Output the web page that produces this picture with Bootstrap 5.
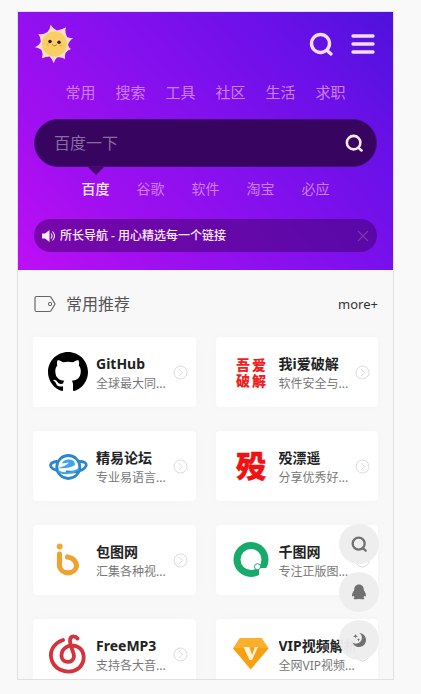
<!DOCTYPE html>
<html lang="zh-CN">
<head>
<meta charset="utf-8">
<meta name="viewport" content="width=device-width, initial-scale=1">
<title>所长导航</title>
<link href="https://cdn.jsdelivr.net/npm/bootstrap@5.3.0/dist/css/bootstrap.min.css" rel="stylesheet">
<style>
body{background:#f9f9f9;font-family:"Noto Sans","Noto Sans CJK SC",sans-serif;color:#222}
svg{display:block;flex:none}
a{text-decoration:none}
.stage{padding:11px 27px 14px 17px}
.phone{background:#f8f8f8;border:1px solid #e0e0e2}
.hero{padding:12px 16px 18px;background:linear-gradient(50deg,#be0ff5 0%,#a20ff0 22%,#8410ee 52%,#6a10e8 78%,#4e12dc 100%)}
.brand{width:40px;height:40px}
.tools{gap:14px}
.tool{width:28px;height:28px;color:#f6dcff}
.cats{gap:20px;margin-top:18px;font-size:15px;line-height:20px}
.cats a,.engines a{color:#cf7df8}
.searchbar{height:48px;margin-top:17px;background:#37055f;border:1px solid #43107a;border-radius:24px;padding:0 10px 0 19px}
.searchbar input{font-size:16px;color:#fff;min-width:0;outline:0}
.searchbar input::placeholder{color:#8a6c9f;opacity:1}
.searchbar .tool{width:24px;height:24px;color:#fdeaff}
.engines{gap:27px;margin-top:12px;font-size:14px;line-height:20px}
.engines .current{color:#fdeaff;font-weight:500}
.engines .current::before{content:"";position:absolute;left:50%;top:-12px;margin-left:-8px;border:8px solid transparent;border-top-color:#470673;border-bottom:0}
.notice{height:33px;margin-top:20px;border-radius:17px;background:rgba(60,0,100,.5);color:#fdeaff;font-size:12px;font-weight:500;padding:0 8px;gap:4px}
.section-head{padding:22px 15px 0 16px;line-height:24px;gap:10px}
.section-head h2{font-size:16px;line-height:24px;color:#555}
.section-head a{font-size:13px;color:#333}
.sites{padding:21px 15px 24px 15px;display:grid;grid-template-columns:repeat(2,minmax(0,1fr));gap:24px 20px}
.site{height:70px;background:#fff;border-radius:4px;padding:0 8px 0 15px;color:#222;box-shadow:0 0 12px rgba(0,0,0,.02)}
.site-text{margin-left:8px;min-width:0;padding-top:4px}
.site-name{font-size:14px;line-height:20px;font-weight:700}
.site-desc{font-size:12px;line-height:20px;color:#777}
.seal{font-family:"Liberation Sans","Noto Sans CJK SC",sans-serif;font-weight:900}
.floats{right:14px;bottom:19px;gap:8px}
.floats button{width:40px;height:40px;background:rgba(237,237,237,.96);color:#707070}
</style>
<script src="https://cdn.jsdelivr.net/npm/bootstrap@5.3.0/dist/js/bootstrap.bundle.min.js"></script>
</head>
<body>
<svg width="0" height="0" class="position-absolute" aria-hidden="true">
<symbol id="find" viewBox="0 0 24 24"><circle cx="11.500" cy="11.500" r="9" fill="none" stroke="currentColor" stroke-width="3.400"/><path d="M18 18.500l4 3.500" stroke="currentColor" stroke-width="3.400" stroke-linecap="round"/></symbol>
<symbol id="go" viewBox="0 0 15 15"><g fill="none" stroke="#dcdcdc"><circle cx="7.500" cy="7.500" r="6.500"/><path d="M6 4l3.500 3.500L6 11"/></g></symbol>
</svg>
<div class="stage vh-100">
<div class="phone position-relative h-100 overflow-hidden">
<header class="hero">
  <div class="d-flex align-items-center justify-content-between">
    <a class="brand" href="#" aria-label="所长导航">
      <svg width="40" height="40" viewBox="0 0 40 40"><path d="M16.700.700Q19 5 23 6.500Q28 6 32 3.300Q30.500 8 33 13Q36 14.500 39.300 14Q35 17 34 21Q35 24 37 25Q33 26.500 31.500 29Q30.500 32 31 35Q27 32.500 23 33.500Q20.500 36 19.700 39.300Q18.500 35 15.500 32.500Q12 32.500 8 34.300Q9.500 30 7.500 26Q5 24 1 23.300Q5.500 21 6.800 17.500Q6.500 12.500 4.300 10Q9 11 13.500 8Q16 5 16.700.700Z" fill="#fbdcc6"/><circle cx="20.500" cy="20" r="12.500" fill="#f8cf62"/><circle cx="16" cy="17.500" r="1.700" fill="#2b1710"/><circle cx="25" cy="18.300" r="1.700" fill="#2b1710"/><path d="M18 20.500q2.500 2.500 5 .200" fill="none" stroke="#c77c30"/><circle cx="14" cy="20.500" r="1.200" fill="#f7b35c"/><circle cx="27" cy="21.500" r="1.200" fill="#f7b35c"/></svg>
    </a>
    <div class="tools d-flex">
      <button type="button" class="tool btn border-0 p-0 d-flex align-items-center justify-content-center" aria-label="搜索"><svg width="24" height="24"><use href="#find"/></svg></button>
      <button type="button" class="tool btn border-0 p-0 d-flex align-items-center justify-content-center" aria-label="菜单"><svg width="24" height="24" viewBox="0 0 24 24"><path d="M2 4h20M2 12h20M2 20h20" stroke="currentColor" stroke-width="3.400" stroke-linecap="round"/></svg></button>
    </div>
  </div>
  <nav class="cats d-flex justify-content-center" aria-label="分类"><a href="#">常用</a><a href="#">搜索</a><a href="#">工具</a><a href="#">社区</a><a href="#">生活</a><a href="#">求职</a></nav>
  <form class="searchbar d-flex align-items-center" role="search">
    <input type="text" class="flex-grow-1 bg-transparent border-0 p-0" placeholder="百度一下" aria-label="百度一下">
    <button type="button" class="tool btn border-0 p-0 d-flex align-items-center justify-content-center" aria-label="搜索"><svg width="18" height="18"><use href="#find"/></svg></button>
  </form>
  <nav class="engines d-flex justify-content-center" aria-label="搜索引擎"><a class="current position-relative" href="#">百度</a><a href="#">谷歌</a><a href="#">软件</a><a href="#">淘宝</a><a href="#">必应</a></nav>
  <div class="notice d-flex align-items-center">
    <svg width="14" height="14" viewBox="0 0 14 14"><path d="M0 4.500h3L7.500 1v12L3 9.500H0z" fill="currentColor"/><path d="M9 4.500q2 2.500 0 5M10.500 2.500q4 4.500 0 9" fill="none" stroke="currentColor" stroke-width="1.100"/></svg>
    <span class="flex-grow-1">所长导航 - 用心精选每一个链接</span>
    <button type="button" class="btn border-0 p-0" aria-label="关闭"><svg width="12" height="12" viewBox="0 0 12 12"><path d="M1 1l10 10M11 1L1 11" stroke="#7c35aa" stroke-width="1.300"/></svg></button>
  </div>
</header>
<main>
  <div class="section-head d-flex align-items-center">
    <svg width="22" height="18" viewBox="0 0 22 18"><path d="M2.500 1.500H15q1.500 0 2.200 1L21 9l-3.800 6.500q-.700 1-2.200 1H2.500Q1 16.500 1 15V3Q1 1.500 2.500 1.500Z" fill="none" stroke="#666" stroke-width="1.200"/><circle cx="16" cy="9" r="1.700" fill="none" stroke="#666"/></svg>
    <h2 class="m-0 fw-normal flex-grow-1">常用推荐</h2>
    <a href="#">more+</a>
  </div>
  <div class="sites">
    <a class="site d-flex align-items-center" href="#">
      <svg width="40" height="40" viewBox="0 0 16 16"><path d="M8 0C3.580 0 0 3.580 0 8c0 3.540 2.290 6.530 5.470 7.590.4.070.55-.17.55-.38 0-.19-.01-.82-.01-1.490-2.010.37-2.530-.49-2.690-.94-.09-.23-.48-.94-.82-1.130-.28-.15-.68-.52-.01-.53.63-.01 1.080.58 1.230.82.72 1.210 1.870.87 2.330.66.07-.52.28-.87.51-1.070-1.780-.2-3.640-.89-3.640-3.950 0-.87.31-1.590.82-2.150-.08-.2-.36-1.020.08-2.120 0 0 .67-.21 2.200.82.64-.18 1.320-.27 2-.27s1.360.09 2 .27c1.530-1.040 2.200-.82 2.200-.82.44 1.100.16 1.920.08 2.120.51.56.82 1.270.82 2.150 0 3.070-1.870 3.750-3.650 3.950.29.25.54.73.54 1.480 0 1.070-.01 1.930-.01 2.200 0 .21.15.46.55.38A8.010 8.010 0 0 0 16 8c0-4.420-3.580-8-8-8z"/></svg>
      <div class="site-text flex-grow-1"><div class="site-name text-nowrap overflow-hidden">GitHub</div><div class="site-desc text-nowrap overflow-hidden">全球最大同...</div></div>
      <svg width="15" height="15"><use href="#go"/></svg>
    </a>
    <a class="site d-flex align-items-center" href="#">
      <svg class="seal" width="40" height="40" viewBox="0 0 40 40" fill="#f21d1d" font-size="14"><text x="5" y="18">吾</text><text x="21" y="18">爱</text><text x="5" y="34">破</text><text x="21" y="34">解</text></svg>
      <div class="site-text flex-grow-1"><div class="site-name text-nowrap overflow-hidden">我i爱破解</div><div class="site-desc text-nowrap overflow-hidden">软件安全与...</div></div>
      <svg width="15" height="15"><use href="#go"/></svg>
    </a>
    <a class="site d-flex align-items-center" href="#">
      <svg width="40" height="40" viewBox="0 0 40 40"><circle cx="20.300" cy="21" r="11.500" fill="#fff" stroke="#2b86cf" stroke-width="2.800"/><path d="M8.500 15.500C0 17 1 22 9 24.500M32 15.500C41 15.500 40 22 31 25Q26 26.500 19 26" fill="none" stroke="#2b86cf" stroke-width="2.800" stroke-linecap="round"/><path d="M10 22Q20 23 27 19Q27 13 20 13.500Q15 14 14 17.500L21 16.500Q18 20 10 22Z" fill="#3aa4ec"/><path d="M10 25Q14 28 20 27Q26 26.500 31 23" fill="none" stroke="#3aa4ec" stroke-width="2"/></svg>
      <div class="site-text flex-grow-1"><div class="site-name text-nowrap overflow-hidden">精易论坛</div><div class="site-desc text-nowrap overflow-hidden">专业易语言...</div></div>
      <svg width="15" height="15"><use href="#go"/></svg>
    </a>
    <a class="site d-flex align-items-center" href="#">
      <svg class="seal" width="40" height="40" viewBox="0 0 40 40" fill="#f01212" stroke="#f01212" stroke-width=".500" font-size="30"><text x="5" y="31">殁</text></svg>
      <div class="site-text flex-grow-1"><div class="site-name text-nowrap overflow-hidden">殁漂遥</div><div class="site-desc text-nowrap overflow-hidden">分享优秀好...</div></div>
      <svg width="15" height="15"><use href="#go"/></svg>
    </a>
    <a class="site d-flex align-items-center" href="#">
      <svg width="40" height="40" viewBox="0 0 40 40"><circle cx="11.700" cy="6.500" r="3" fill="#f3a638"/><path d="M11.500 14v12.500a8.700 8 0 0 0 17 0q0-8-9-9.500" fill="none" stroke="#eda32f" stroke-width="5.200" stroke-linecap="round"/></svg>
      <div class="site-text flex-grow-1"><div class="site-name text-nowrap overflow-hidden">包图网</div><div class="site-desc text-nowrap overflow-hidden">汇集各种视...</div></div>
      <svg width="15" height="15"><use href="#go"/></svg>
    </a>
    <a class="site d-flex align-items-center" href="#">
      <svg width="40" height="40" viewBox="0 0 40 40"><circle cx="20" cy="19.500" r="14" fill="none" stroke="#16aa6b" stroke-width="7"/><path d="M28 28h12v12H28z" fill="#fff"/><circle cx="26.500" cy="26.700" r="3" fill="#fff" stroke="#16aa6b"/></svg>
      <div class="site-text flex-grow-1"><div class="site-name text-nowrap overflow-hidden">千图网</div><div class="site-desc text-nowrap overflow-hidden">专注正版图...</div></div>
      <svg width="15" height="15"><use href="#go"/></svg>
    </a>
    <a class="site d-flex align-items-center" href="#">
      <svg width="40" height="40" viewBox="0 0 40 40"><path d="M15 6C4 10 1 19 4 27C8 37 22 41 31 34C38 27 37 16 29 12.500C21 9.500 13.500 14 13.500 21.500C13.500 30 26 30 26 22C26 18 22 13 22 7Q22 2 26 2.500Q28 2.500 29.500 4.500" fill="none" stroke="#d4333b" stroke-width="3.800" stroke-linecap="round"/></svg>
      <div class="site-text flex-grow-1"><div class="site-name text-nowrap overflow-hidden">FreeMP3</div><div class="site-desc text-nowrap overflow-hidden">支持各大音...</div></div>
      <svg width="15" height="15"><use href="#go"/></svg>
    </a>
    <a class="site d-flex align-items-center" href="#">
      <svg width="40" height="40" viewBox="0 0 40 40"><path d="M9 4h21.500l7 10.500L19.700 35.500 2 14.500z" fill="#f9a010"/><path d="M9 4h21.500L37 14H2.500z" fill="#fbb02c"/><path d="M12.500 13h6l2.500 8 3-8h3l-6 13h-2.500z" fill="#fff3d8"/></svg>
      <div class="site-text flex-grow-1"><div class="site-name text-nowrap overflow-hidden">VIP视频解析</div><div class="site-desc text-nowrap overflow-hidden">全网VIP视频...</div></div>
      <svg width="15" height="15"><use href="#go"/></svg>
    </a>
  </div>
</main>
<div class="floats position-absolute d-flex flex-column">
  <button type="button" class="btn border-0 p-0 rounded-circle d-flex align-items-center justify-content-center" aria-label="搜索"><svg width="16" height="16"><use href="#find"/></svg></button>
  <button type="button" class="btn border-0 p-0 rounded-circle d-flex align-items-center justify-content-center" aria-label="QQ"><svg width="16" height="16" viewBox="0 0 16 16"><path d="M8 .500c3.200 0 4.800 2.300 4.800 5.500 1.200 1.800 2.400 4 2.200 6-.300.700-1 .300-1.500-.200l-1 1.500 1 1.400q-.300.800-5.500.400-5.200.400-5.500-.400l1-1.400-1-1.500c-.500.500-1.200.900-1.500.200-.200-2 1-4.200 2.200-6C3.200 2.800 4.800.500 8 .500z" fill="currentColor"/></svg></button>
  <button type="button" class="btn border-0 p-0 rounded-circle d-flex align-items-center justify-content-center" aria-label="夜间模式"><svg width="16" height="16" viewBox="0 0 16 16"><path d="M8.500 1a7 7 0 1 1-7 9.500A5.800 5.800 0 1 0 8.500 1z" fill="currentColor"/><path d="M4.500 2l.700 1.600 1.600.700-1.600.7-.7 1.600-.7-1.600-1.600-.7 1.600-.7zM7.500 6l.5 1.200 1.200.5-1.200.5-.5 1.200-.5-1.200-1.200-.5 1.200-.5z" fill="currentColor"/></svg></button>
</div>
</div>
</div>
</body>
</html>
